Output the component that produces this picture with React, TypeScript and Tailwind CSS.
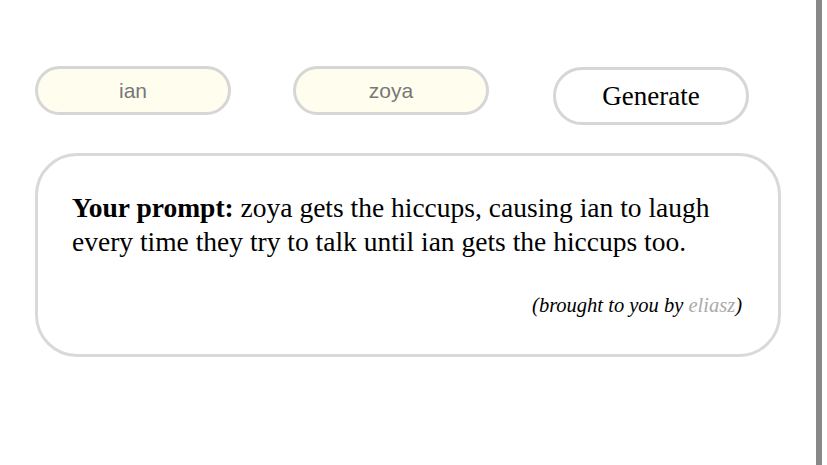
import React from 'react';

const App: React.FC = () => {
  return (
    <div className="relative w-[827px] h-[465px] bg-white overflow-hidden" style={{ fontFamily: '"Liberation Serif", serif' }}>
      {/* right edge bar */}
      <div className="absolute top-0 left-[816px] w-[6px] h-full bg-[#888888]" />

      <div className="pt-[66px] pl-[35px] w-[781px]">
        <div className="flex items-start">
          <input
            className="w-[196px] h-[49px] rounded-full border-[3px] border-[#d6d6d6] bg-[#fffdee] text-center text-[21px] text-[#777] outline-none placeholder:text-[#777]"
            style={{ fontFamily: '"Liberation Sans", Arial, sans-serif' }}
            placeholder="ian"
          />
          <input
            className="ml-[62px] w-[196px] h-[49px] rounded-full border-[3px] border-[#d6d6d6] bg-[#fffdee] text-center text-[21px] text-[#777] outline-none placeholder:text-[#777]"
            style={{ fontFamily: '"Liberation Sans", Arial, sans-serif' }}
            placeholder="zoya"
          />
          <button className="ml-[64px] mt-[1px] w-[196px] h-[58px] rounded-full border-[3px] border-[#d6d6d6] bg-white text-[27px] text-black">
            Generate
          </button>
        </div>

        <div className="mt-[28px] w-[746px] h-[204px] rounded-[42px] border-[3px] border-[#d9d9d9] bg-white pl-[34px] pr-[36px] pt-[35px]">
          <p className="text-[27.5px] leading-[34px] text-black">
            <b>Your prompt:</b> zoya gets the hiccups, causing ian to laugh every time they try to talk until ian gets the hiccups too.
          </p>
          <p className="mt-[31px] text-right italic text-[20.5px] text-black">
            (brought to you by <span className="text-[#aaaaaa]">eliasz</span>)
          </p>
        </div>
      </div>
    </div>
  );
};

export default App;
